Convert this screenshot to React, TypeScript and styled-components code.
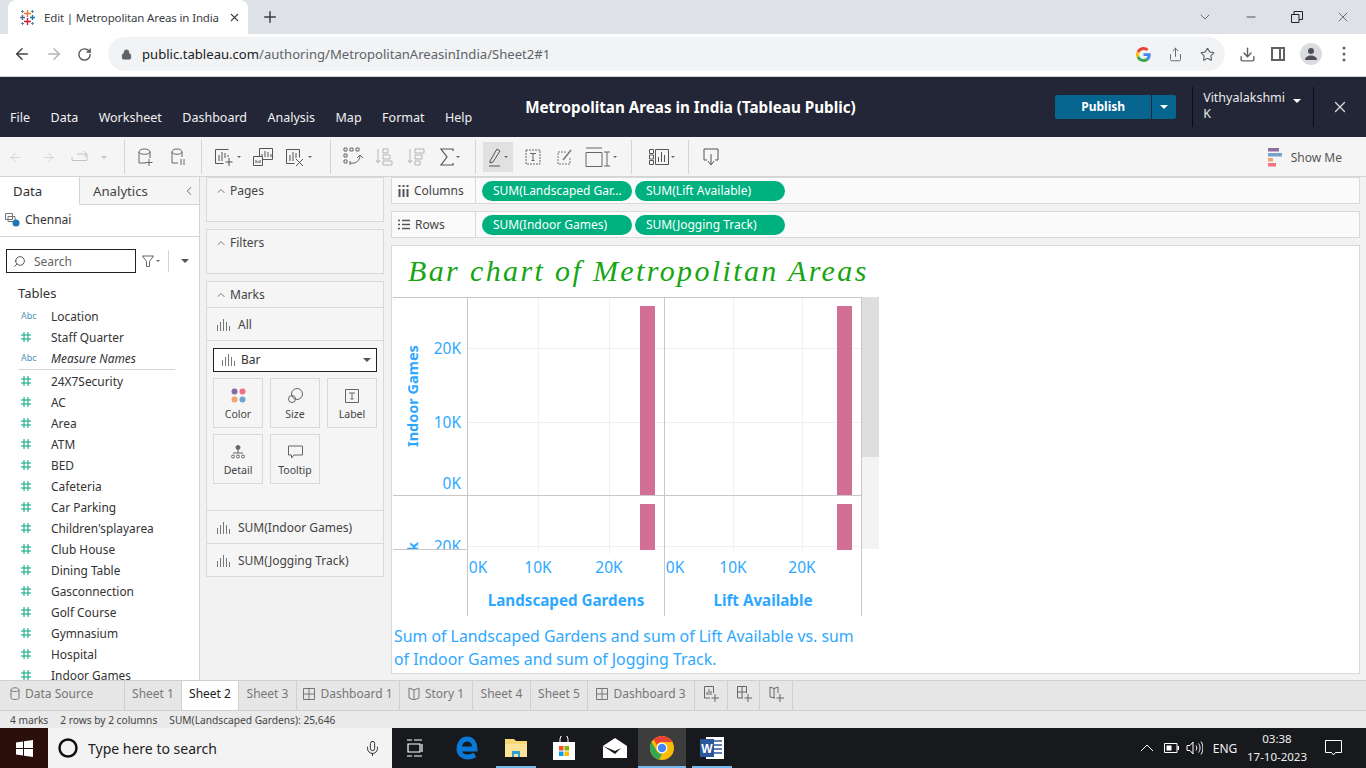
import React from 'react';
import styled, { createGlobalStyle } from 'styled-components';
import { ArrowLeft, ArrowRight, RotateCw, Lock, Share, Star, Download, X, Plus, ChevronDown, ChevronUp, ChevronLeft, Minus, Search, Mic } from 'lucide-react';

const Global = createGlobalStyle`
  html, body { margin: 0; padding: 0; overflow: hidden; background: #fff; }
  * { box-sizing: border-box; }
  svg { flex: none; }
`;

const UI = `"Noto Sans", "Open Sans", sans-serif`;

const Page = styled.div`
  width: 1366px;
  height: 768px;
  display: flex;
  flex-direction: column;
  overflow: hidden;
  font-family: ${UI};
  color: #333;
`;

/* ---------- browser chrome ---------- */
const TabStrip = styled.div`
  height: 34px;
  background: #dee1e6;
  display: flex;
  align-items: flex-end;
  padding-left: 8px;
  flex: none;
`;
const BrowserTab = styled.div`
  width: 240px;
  height: 34px;
  background: #fff;
  border-radius: 8px 8px 0 0;
  display: flex;
  align-items: center;
  padding: 0 10px 0 12px;
  gap: 9px;
  font-size: 11.5px;
  color: #3c4043;
  white-space: nowrap;
`;
const TabTitle = styled.span`
  flex: 1;
  letter-spacing: -0.15px;
`;
const NewTab = styled.div`
  width: 44px;
  height: 34px;
  display: flex;
  align-items: center;
  justify-content: center;
  color: #3c4043;
`;
const WindowButtons = styled.div`
  margin-left: auto;
  display: flex;
  height: 34px;
  align-items: center;
  color: #333;
`;
const WindowButton = styled.div<{ $w: number }>`
  width: ${(p) => p.$w}px;
  display: flex;
  justify-content: center;
`;
const AddressRow = styled.div`
  height: 43px;
  flex: none;
  background: #fff;
  border-bottom: 1px solid #d3d5d8;
  display: flex;
  align-items: center;
  padding-bottom: 2px;
`;
const NavIcons = styled.div`
  width: 108px;
  display: flex;
  align-items: center;
  padding-left: 13px;
  gap: 14px;
  color: #5f6368;
`;
const UrlBar = styled.div`
  width: 1117px;
  height: 34px;
  border-radius: 17px;
  background: #f1f3f4;
  display: flex;
  align-items: center;
  padding: 0 10px 0 13px;
  font-size: 13.1px;
  color: #5f6368;
`;
const UrlText = styled.span`
  margin-left: 10px;
  flex: 1;
  b { font-weight: 400; color: #202124; }
`;
const UrlIcons = styled.div`
  display: flex;
  align-items: center;
  gap: 17px;
  color: #5f6368;
`;
const BrowserActions = styled.div`
  flex: 1;
  display: flex;
  align-items: center;
  padding-left: 14px;
  gap: 15px;
  color: #5f6368;
`;
const Avatar = styled.div`
  width: 22px;
  height: 22px;
  border-radius: 50%;
  background: #dadce0;
  display: flex;
  align-items: center;
  justify-content: center;
  margin-right: 5px;
`;

/* ---------- tableau header ---------- */
const Header = styled.div`
  height: 60px;
  flex: none;
  background: #232637;
  display: flex;
  color: #fff;
`;
const MenuBar = styled.div`
  width: 481px;
  display: flex;
  align-items: flex-end;
  padding: 0 0 11px 10px;
  gap: 20.5px;
  font-size: 12.5px;
  color: #f1f1f1;
`;
const DocTitle = styled.div`
  width: 420px;
  text-align: center;
  font-weight: 700;
  font-size: 15.2px;
  line-height: 60px;
  white-space: nowrap;
`;
const PublishWrap = styled.div`
  margin-left: 155px;
  display: flex;
  width: 121px;
  height: 24px;
  margin-top: 18px;
  border-radius: 2px;
  overflow: hidden;
  background: #06658f;
`;
const PublishButton = styled.div`
  width: 97px;
  font-size: 12px;
  font-weight: 700;
  text-align: center;
  line-height: 24px;
  border-right: 1px solid #232637;
`;
const PublishCaret = styled.div`
  width: 24px;
  display: flex;
  align-items: center;
  justify-content: center;
`;
const Caret = styled.i<{ $c?: string; $s?: number }>`
  display: inline-block;
  width: 0;
  height: 0;
  border-left: ${(p) => p.$s ?? 4}px solid transparent;
  border-right: ${(p) => p.$s ?? 4}px solid transparent;
  border-top: ${(p) => p.$s ?? 4}px solid ${(p) => p.$c ?? '#fff'};
`;
const UserBox = styled.div`
  margin: 10px 0 0 16px;
  width: 122px;
  height: 40px;
  border-left: 1px solid #0c0d12;
  border-right: 1px solid #0c0d12;
  padding: 3px 0 0 10px;
  font-size: 12.5px;
  line-height: 16px;
  color: #e9e9e9;
  position: relative;
`;
const UserCaret = styled.span`
  position: absolute;
  left: 100px;
  top: 4px;
`;
const HeaderClose = styled.div`
  width: 52px;
  display: flex;
  align-items: center;
  justify-content: center;
  color: #d8d8d8;
`;

/* ---------- toolbar ---------- */
const Toolbar = styled.div`
  height: 40px;
  flex: none;
  background: #f5f5f5;
  border-bottom: 1px solid #d4d4d4;
  padding-top: 1px;
  display: flex;
  align-items: center;
`;
const ToolGroup = styled.div<{ $w: number; $pl?: number; $end?: boolean }>`
  width: ${(p) => p.$w}px;
  height: 34px;
  padding-left: ${(p) => p.$pl ?? 0}px;
  display: flex;
  align-items: center;
  border-right: ${(p) => (p.$end ? 'none' : '1px solid #d4d4d4')};
`;
const Tool = styled.div<{ $w: number; $on?: boolean }>`
  width: ${(p) => p.$w}px;
  height: 30px;
  display: flex;
  align-items: center;
  justify-content: center;
  gap: 2px;
  background: ${(p) => (p.$on ? '#e1e1e1' : 'transparent')};
`;
const ShowMe = styled.div`
  margin-left: auto;
  padding-right: 24px;
  display: flex;
  align-items: center;
  gap: 9px;
  font-size: 12px;
  color: #555;
`;

/* ---------- workspace ---------- */
const Workspace = styled.div`
  height: 503px;
  flex: none;
  display: flex;
  background: #f2f2f2;
  overflow: hidden;
`;
const Sidebar = styled.div`
  width: 200px;
  flex: none;
  background: #fff;
  border-right: 1px solid #d4d4d4;
  height: 503px;
  overflow: hidden;
`;
const SideTabs = styled.div`
  height: 28px;
  display: flex;
  align-items: center;
  background: #f5f5f5;
  border-bottom: 1px solid #d4d4d4;
  font-size: 13.2px;
`;
const SideTab = styled.div<{ $on?: boolean; $w: number }>`
  width: ${(p) => p.$w}px;
  height: 28px;
  line-height: 28px;
  padding-left: 13px;
  background: ${(p) => (p.$on ? '#fff' : 'transparent')};
  border-right: ${(p) => (p.$on ? '1px solid #d4d4d4' : 'none')};
  border-bottom: ${(p) => (p.$on ? '1px solid #fff' : 'none')};
  color: ${(p) => (p.$on ? '#333' : '#444')};
`;
const Collapse = styled.div`
  margin-left: auto;
  width: 17px;
  color: #555;
  display: flex;
  align-items: center;
`;
const SourceRow = styled.div`
  height: 32px;
  border-bottom: 1px solid #d4d4d4;
  display: flex;
  align-items: center;
  padding: 0 0 2px 5px;
  gap: 5px;
  font-size: 12px;
`;
const SearchRow = styled.div`
  display: flex;
  align-items: center;
  margin: 12px 0 0 6px;
`;
const SearchBox = styled.div`
  width: 130px;
  height: 24px;
  border: 1px solid #222;
  display: flex;
  align-items: center;
  padding-left: 6px;
  gap: 8px;
  font-size: 12px;
  color: #666;
`;
const SearchGlass = styled(Search)`
  transform: scaleX(-1);
`;
const SearchTools = styled.div`
  display: flex;
  align-items: center;
  padding-left: 6px;
  height: 22px;
  gap: 2px;
`;
const SearchDivider = styled.div`
  width: 1px;
  height: 22px;
  background: #d4d4d4;
  margin: 0 10px 0 6px;
`;
const TablesHead = styled.div`
  margin: 10px 0 0 18px;
  height: 21px;
  line-height: 21px;
  font-size: 13px;
  color: #333;
`;
const FieldList = styled.div`
  margin-top: 1px;
`;
const Field = styled.div`
  height: 21px;
  display: flex;
  align-items: center;
  font-size: 11.9px;
  color: #333;
  white-space: nowrap;
`;
const FieldIcon = styled.div`
  width: 51px;
  padding-left: 21px;
  display: flex;
  align-items: center;
`;
const AbcTag = styled.span`
  font-size: 9px;
  color: #4d94b8;
`;
const FieldName = styled.span<{ $it?: boolean }>`
  font-style: ${(p) => (p.$it ? 'italic' : 'normal')};
`;
const Rule = styled.div`
  height: 1px;
  margin: 1px 24px 0 18px;
  background: #d4d4d4;
`;

/* ---------- cards ---------- */
const Shelves = styled.div`
  width: 178px;
  flex: none;
  margin: 0 0 0 6px;
  display: flex;
  flex-direction: column;
  gap: 7px;
`;
const Card = styled.div<{ $h: number }>`
  height: ${(p) => p.$h}px;
  background: #f5f5f5;
  border: 1px solid #d9d9d9;
`;
const CardHead = styled.div`
  height: 25px;
  display: flex;
  align-items: center;
  padding-left: 8px;
  gap: 3px;
  font-size: 12px;
  color: #444;
`;
const MarksRow = styled.div`
  height: 33px;
  border-top: 1px solid #d9d9d9;
  display: flex;
  align-items: center;
  padding-left: 10px;
  gap: 8px;
  font-size: 12px;
  color: #444;
`;
const MarksBody = styled.div`
  height: 170px;
  border-top: 1px solid #d9d9d9;
`;
const MarkSelect = styled.div`
  margin: 7px 6px 0 6px;
  height: 24px;
  border: 1px solid #222;
  background: #fff;
  display: flex;
  align-items: center;
  padding: 0 5px 1px 8px;
  gap: 6px;
  font-size: 12px;
  i { margin-left: auto; }
`;
const MarkGrid = styled.div`
  margin: 6px 0 0 6px;
  height: 133px;
  display: grid;
  grid-template-columns: repeat(3, 50px);
  grid-auto-rows: 50px;
  gap: 6px 7px;
`;
const MarkBtn = styled.div`
  border: 1px solid #d9d9d9;
  background: #f5f5f5;
  display: flex;
  flex-direction: column;
  align-items: center;
  justify-content: flex-start;
  padding-top: 8px;
  gap: 3px;
  font-size: 10.5px;
  color: #444;
`;
const MarkIcon = styled.div`
  height: 17px;
  display: flex;
  align-items: center;
`;

/* ---------- right side ---------- */
const Main = styled.div`
  width: 969px;
  margin: 0 0 0 7px;
  display: flex;
  flex-direction: column;
  gap: 7px;
`;
const Shelf = styled.div`
  height: 27px;
  background: #fafafa;
  border: 1px solid #d9d9d9;
  display: flex;
  align-items: center;
`;
const ShelfLabel = styled.div`
  width: 84px;
  height: 25px;
  padding-left: 6px;
  border-right: 1px solid #d9d9d9;
  display: flex;
  align-items: center;
  gap: 5px;
  font-size: 12px;
  color: #444;
`;
const Pills = styled.div`
  display: flex;
  gap: 3px;
  padding-left: 6px;
`;
const Pill = styled.div`
  width: 150px;
  height: 20px;
  border-radius: 10px;
  background: #00b180;
  color: #fff;
  font-size: 12px;
  line-height: 20px;
  padding-left: 11px;
  white-space: nowrap;
`;
const Viz = styled.div`
  height: 429px;
  background: #fff;
  border: 1px solid #d9d9d9;
`;
const VizTitle = styled.div`
  height: 51px;
  padding: 7px 0 0 16px;
  font-family: "Liberation Serif", serif;
  font-style: italic;
  font-size: 30px;
  line-height: 36px;
  color: #17a512;
  letter-spacing: 2.37px;
  white-space: nowrap;
`;
const ChartSvg = styled.svg`
  display: block;
  margin-left: 1px;
`;
const Caption = styled.div`
  padding: 8px 0 0 2px;
  width: 472px;
  font-size: 15.85px;
  line-height: 23px;
  color: #2ea8ff;
`;

/* ---------- bottom bars ---------- */
const SheetTabs = styled.div`
  height: 31px;
  flex: none;
  background: #e6e6e6;
  border-top: 1px solid #cfcfcf;
  border-bottom: 1px solid #cfcfcf;
  display: flex;
`;
const SheetTab = styled.div<{ $w: number; $on?: boolean; $start?: boolean }>`
  width: ${(p) => p.$w}px;
  display: flex;
  align-items: center;
  justify-content: ${(p) => (p.$start ? 'flex-start' : 'center')};
  gap: 5px;
  padding: 0 0 4px ${(p) => (p.$start ? 10 : 0)}px;
  font-size: 12px;
  white-space: nowrap;
  color: ${(p) => (p.$on ? '#222' : '#777')};
  background: ${(p) => (p.$on ? '#fff' : 'transparent')};
  border-right: 1px solid #d0d0d0;
`;
const StatusBar = styled.div`
  height: 17px;
  flex: none;
  background: #eaeaea;
  display: flex;
  align-items: center;
  padding-left: 10px;
  gap: 12px;
  font-size: 10.2px;
  color: #444;
`;
const Taskbar = styled.div`
  height: 40px;
  flex: none;
  background: #17191c;
  display: flex;
  align-items: stretch;
  color: #fff;
`;
const StartButton = styled.div`
  width: 48px;
  background: #2a0f0a;
  display: flex;
  align-items: center;
  justify-content: center;
`;
const TaskSearch = styled.div`
  width: 344px;
  background: #f3f3f3;
  display: flex;
  align-items: center;
  padding: 0 11px 0 10px;
  gap: 10px;
  font-size: 14px;
  color: #222;
`;
const TaskSearchText = styled.span`
  flex: 1;
`;
const TaskApps = styled.div`
  display: flex;
`;
const TaskApp = styled.div<{ $w: number; $on?: boolean; $open?: boolean }>`
  width: ${(p) => p.$w}px;
  display: flex;
  align-items: center;
  justify-content: center;
  background: ${(p) => (p.$on ? '#3d3d3d' : 'transparent')};
  position: relative;
  &::after {
    content: '';
    display: ${(p) => (p.$open ? 'block' : 'none')};
    position: absolute;
    left: 0;
    right: 0;
    bottom: 0;
    height: 2px;
    background: #76b9ed;
  }
`;
const Tray = styled.div`
  margin-left: auto;
  display: flex;
  align-items: center;
  font-size: 12px;
  color: #f0f0f0;
`;
const TrayItem = styled.div<{ $w: number; $ml?: number }>`
  width: ${(p) => p.$w}px;
  margin-left: ${(p) => p.$ml ?? 0}px;
  display: flex;
  justify-content: center;
  align-items: center;
`;
const Clock = styled.div`
  width: 76px;
  text-align: center;
  line-height: 18px;
  font-size: 11.5px;
`;

/* ---------- drawn icons ---------- */
const TableauMark = () => (
  <svg width="15" height="15" viewBox="0 0 15 15" strokeWidth="1.4">
    <path d="M7.5 0v7M4 3.5h7" stroke="#e8762b" />
    <path d="M7.5 8v7M4 11.5h7" stroke="#c72035" />
    <path d="M2.5 5v5M0 7.5h5" stroke="#5b6591" />
    <path d="M12.5 5v5M10 7.5h5" stroke="#1f77b4" />
    <path d="M2.5 0v3M1 1.5h3M12.5 0v3M11 1.5h3M2.5 12v3M1 13.5h3M12.5 12v3M11 13.5h3" stroke="#59879b" strokeWidth="1" />
  </svg>
);

const GoogleG = () => (
  <svg width="15" height="15" viewBox="0 0 48 48">
    <path fill="#EA4335" d="M24 9.500c3.540 0 6.710 1.220 9.210 3.600l6.850-6.850C35.900 2.380 30.470 0 24 0 14.620 0 6.510 5.380 2.560 13.220l7.980 6.190C12.430 13.720 17.740 9.500 24 9.500z" />
    <path fill="#4285F4" d="M46.980 24.550c0-1.570-.15-3.090-.38-4.550H24v9.020h12.940c-.58 2.960-2.260 5.480-4.780 7.180l7.730 6c4.510-4.180 7.090-10.360 7.090-17.650z" />
    <path fill="#FBBC05" d="M10.530 28.590c-.48-1.450-.76-2.990-.76-4.590s.27-3.140.76-4.590l-7.980-6.190C.92 16.460 0 20.120 0 24c0 3.880.92 7.540 2.560 10.780l7.970-6.190z" />
    <path fill="#34A853" d="M24 48c6.480 0 11.930-2.130 15.890-5.810l-7.730-6c-2.150 1.450-4.920 2.300-8.160 2.300-6.260 0-11.570-4.220-13.470-9.910l-7.980 6.190C6.510 42.620 14.620 48 24 48z" />
  </svg>
);

const Line = ({ w = 20, h = 20, d, c = '#666', sw = 1 }: { w?: number; h?: number; d: string; c?: string; sw?: number }) => (
  <svg width={w} height={h} viewBox={`0 0 ${w} ${h}`} fill="none" stroke={c} strokeWidth={sw}>
    <path d={d} />
  </svg>
);

const BarGlyph = () => (
  <svg width="13" height="13" viewBox="0 0 13 13" stroke="#777" strokeWidth="1">
    <path d="M.5 13V7M3.500 13V4M6.500 13V1M9.500 13V4M12.500 13V8" />
  </svg>
);

const HashIcon = () => (
  <svg width="10" height="10" viewBox="0 0 10 10" stroke="#00a67c" strokeWidth="1">
    <path d="M3 0v10M7 0v10M0 3h10M0 7h10" />
  </svg>
);

const ChromeLogo = () => (
  <svg width="24" height="24" viewBox="0 0 24 24">
    <circle cx="12" cy="12" r="12" fill="#fbbc05" />
    <path d="M12 0a12 12 0 0 1 10.400 6H12a6 6 0 0 0-5.200 3L3.500 3.500A12 12 0 0 1 12 0z" fill="#ea4335" />
    <path d="M1.600 6l5.200 9a6 6 0 0 0 5.200 3l-3 5.700A12 12 0 0 1 1.600 6z" fill="#34a853" />
    <circle cx="12" cy="12" r="5.400" fill="#fff" />
    <circle cx="12" cy="12" r="4.200" fill="#4285f4" />
  </svg>
);

const fields = ['24X7Security', 'AC', 'Area', 'ATM', 'BED', 'Cafeteria', 'Car Parking', "Children'splayarea", 'Club House', 'Dining Table', 'Gasconnection', 'Golf Course', 'Gymnasium', 'Hospital', 'Indoor Games'];

const axis = '#2ea8ff';
const gridV = [538, 609, 733, 802];
const bars = [640, 837];

const Chart = () => (
  <ChartSvg width="490" height="320" viewBox="393 297 490 320" fontFamily={UI}>
    <defs>
      <clipPath id="pane">
        <rect x="393" y="297" width="490" height="252" />
      </clipPath>
    </defs>
    <rect x="862" y="297" width="17" height="252" fill="#f3f3f3" />
    <rect x="862" y="297" width="17" height="160" fill="#dedede" />
    {gridV.map((x) => (
      <line key={x} x1={x + 0.5} x2={x + 0.5} y1="297" y2="554" stroke="#f0f0f0" />
    ))}
    {[348, 422, 546].map((y) => (
      <line key={y} x1="467" x2="861" y1={y + 0.5} y2={y + 0.5} stroke="#f0f0f0" />
    ))}
    {bars.map((x) => (
      <g key={x} fill="#d17094">
        <rect x={x} y="306" width="15" height="189" />
        <rect x={x} y="504" width="15" height="46" />
      </g>
    ))}
    <g stroke="#c8c8c8">
      <line x1="393" x2="861" y1="297.500" y2="297.500" />
      <line x1="393" x2="861" y1="495.500" y2="495.500" />
      <line x1="393" x2="467" y1="549.500" y2="549.500" />
      {[467, 664, 861].map((x) => (
        <line key={x} x1={x + 0.5} x2={x + 0.5} y1="297" y2="616" />
      ))}
    </g>
    <g fill={axis} fontSize="15.5" textAnchor="end">
      <text x="461" y="354">20K</text>
      <text x="461" y="428">10K</text>
      <text x="461" y="489">0K</text>
      <text x="461" y="552" clipPath="url(#pane)">20K</text>
    </g>
    <g fill={axis} fontWeight="700" fontSize="14.5">
      <text transform="translate(418 447) rotate(-90)">Indoor Games</text>
      <g clipPath="url(#pane)">
        <text transform="translate(418 551) rotate(-90)">k</text>
      </g>
    </g>
    <g fill={axis} fontSize="15.5" textAnchor="middle">
      <text x="478" y="573">0K</text>
      <text x="538" y="573">10K</text>
      <text x="609" y="573">20K</text>
      <text x="675" y="573">0K</text>
      <text x="733" y="573">10K</text>
      <text x="802" y="573">20K</text>
    </g>
    <g fill={axis} fontSize="15.2" fontWeight="700" textAnchor="middle">
      <text x="566" y="606">Landscaped Gardens</text>
      <text x="763" y="606">Lift Available</text>
    </g>
  </ChartSvg>
);

export default function App() {
  return (
    <Page>
      <Global />
      <TabStrip>
        <BrowserTab>
          <TableauMark />
          <TabTitle>Edit | Metropolitan Areas in India</TabTitle>
          <X size={13} strokeWidth={2} />
        </BrowserTab>
        <NewTab>
          <Plus size={18} strokeWidth={2} />
        </NewTab>
        <WindowButtons>
          <WindowButton $w={46}><ChevronDown size={16} strokeWidth={1} /></WindowButton>
          <WindowButton $w={46}><Minus size={14} strokeWidth={1.4} /></WindowButton>
          <WindowButton $w={46}>
            <Line w={12} h={12} d="M.5 3.500h7.500v8H.5zM3 3.500V.5h8.500v8H8" c="#222" />
          </WindowButton>
          <WindowButton $w={46}><X size={16} strokeWidth={1} /></WindowButton>
        </WindowButtons>
      </TabStrip>
      <AddressRow>
        <NavIcons>
          <ArrowLeft size={18} strokeWidth={2} color="#444" />
          <ArrowRight size={18} strokeWidth={2} color="#b3b5b8" />
          <RotateCw size={15} strokeWidth={2.2} color="#555" />
        </NavIcons>
        <UrlBar>
          <Lock size={11} fill="#5f6368" strokeWidth={2} />
          <UrlText><b>public.tableau.com</b>/authoring/MetropolitanAreasinIndia/Sheet2#1</UrlText>
          <UrlIcons>
            <GoogleG />
            <Share size={15} strokeWidth={1.5} />
            <Star size={15} strokeWidth={1.8} />
          </UrlIcons>
        </UrlBar>
        <BrowserActions>
          <Download size={17} strokeWidth={2} />
          <Line w={14} h={14} d="M1 1h12v12H1zM9 1v12" c="#5f6368" sw={2} />
          <Avatar>
            <svg width="14" height="14" viewBox="0 0 14 14" fill="#4d5156">
              <circle cx="7" cy="4" r="3" />
              <path d="M1 13c0-3 3-4.500 6-4.500s6 1.500 6 4.500z" />
            </svg>
          </Avatar>
          <svg width="4" height="16" viewBox="0 0 4 16" fill="#5f6368">
            <circle cx="2" cy="2" r="1.500" />
            <circle cx="2" cy="8" r="1.500" />
            <circle cx="2" cy="14" r="1.500" />
          </svg>
        </BrowserActions>
      </AddressRow>

      <Header>
        <MenuBar>
          {['File', 'Data', 'Worksheet', 'Dashboard', 'Analysis', 'Map', 'Format', 'Help'].map((m) => (
            <span key={m}>{m}</span>
          ))}
        </MenuBar>
        <DocTitle>Metropolitan Areas in India (Tableau Public)</DocTitle>
        <PublishWrap>
          <PublishButton>Publish</PublishButton>
          <PublishCaret><Caret $s={4} /></PublishCaret>
        </PublishWrap>
        <UserBox>
          Vithyalakshmi
          <br />
          K
          <UserCaret><Caret $s={4} /></UserCaret>
        </UserBox>
        <HeaderClose><X size={18} strokeWidth={1.8} /></HeaderClose>
      </Header>

      <Toolbar>
        <ToolGroup $w={125}>
          <Tool $w={31}><ArrowLeft size={15} strokeWidth={1} color="#c2c2c2" /></Tool>
          <Tool $w={34}><ArrowRight size={15} strokeWidth={1} color="#c2c2c2" /></Tool>
          <Tool $w={31}><Line w={20} h={14} d="M1 7v3.500h15V4H6M16 4l-3-3M16 4l-3 3" c="#c2c2c2" /></Tool>
          <Tool $w={16}><Caret $c="#c2c2c2" $s={3} /></Tool>
        </ToolGroup>
        <ToolGroup $w={77} $pl={6}>
          <Tool $w={32}><Line w={20} h={20} d="M2 5c0-4 11-4 11 0v6M2 5c0 3 11 3 11 0M2 5v11h7M12 12v7M8.500 15.500h7" c="#666" /></Tool>
          <Tool $w={32}><Line w={18} h={20} d="M2 5c0-4 10-4 10 0v5M2 5c0 3 10 3 10 0M2 5v11h6M11 12v6M14 12v6" c="#666" /></Tool>
        </ToolGroup>
        <ToolGroup $w={129} $pl={8}>
          <Tool $w={36}><Line w={20} h={20} d="M.5 2.500h13M.5 2.500v14h8M4 14V8M7 14V5M10 11V6M13 10V8M14 11v8M10.500 15h7" c="#555" /><Caret $c="#666" $s={2.5} /></Tool>
          <Tool $w={34}><Line w={20} h={20} d="M6.500 9V1.500h13v11H10M9 9V7M12 10V4M15 10V5M18 10V7M.5 9.500h9v9h-9zM3 16v-3M5 16v-2M7 16v-3" c="#555" /></Tool>
          <Tool $w={38}><Line w={20} h={20} d="M.5 2.500h13v8M.5 2.500v14h8M4 14V8M7 14V5M10 11V6M10 12l7 7M17 12l-7 7" c="#555" /><Caret $c="#666" $s={2.5} /></Tool>
        </ToolGroup>
        <ToolGroup $w={145} $pl={6}>
          <Tool $w={32}><Line w={20} h={20} d="M1 1h3v3H1zM7 1h3v3H7zM13 1h3v3h-3zM1 7h3v3H1zM1 13h3v3H1zM7 16c6 1 10-2 10-8M14 11l3-3 3 3M7 14v4" c="#666" /></Tool>
          <Tool $w={30}><Line w={18} h={20} d="M3 2v14M1 13l2 3 2-3M8 2h5v4H8zM8 8h7v4H8zM8 14h9v4H8z" c="#b5b5b5" /></Tool>
          <Tool $w={34}><Line w={18} h={20} d="M3 2v14M1 13l2 3 2-3M8 2h9v4H8zM8 8h7v4H8zM8 14h5v4H8z" c="#b5b5b5" /></Tool>
          <Tool $w={34}>
            <Line w={14} h={18} d="M13 3V1H1l6 8-6 8h12v-2" c="#555" sw={1.200} />
            <Caret $c="#666" $s={2.5} />
          </Tool>
        </ToolGroup>
        <ToolGroup $w={156} $pl={7}>
          <Tool $w={30} $on>
            <Line w={14} h={20} d="M2 14L9 2l3 2-7 11-3 1zM1 19h11" c="#555" />
            <Caret $c="#666" $s={2.5} />
          </Tool>
          <Tool $w={40}>
            <svg width="16" height="16" viewBox="0 0 16 16" fill="none" stroke="#666">
              <path d="M1 1h14v14H1z" strokeDasharray="2 1" />
              <path d="M5 4.500h6M8 4.500v7M6.500 11.500h3" />
            </svg>
          </Tool>
          <Tool $w={24}>
            <svg width="16" height="16" viewBox="0 0 16 16" fill="none" stroke="#777">
              <path d="M9 3H1v12h12V8" strokeDasharray="2 1" />
              <path d="M6 11L14 1" strokeWidth="1.500" />
            </svg>
          </Tool>
          <Tool $w={48}>
            <Line w={26} h={20} d="M1 1h16M1 5.500h16v14H1zM19 5h6M22 5v14M19 19h6" c="#666" />
            <Caret $c="#666" $s={2.5} />
          </Tool>
        </ToolGroup>
        <ToolGroup $w={57} $pl={8}>
          <Tool $w={44}>
            <Line w={20} h={16} d="M.5 .5h4v4h-4zM.5 6h4v4h-4zM.5 11.500h4v4h-4zM6.500 .5h13v15h-13zM9.500 13V8M12.500 13V3M15.500 13V6" c="#555" />
            <Caret $c="#666" $s={2.5} />
          </Tool>
        </ToolGroup>
        <ToolGroup $w={60} $end>
          <Tool $w={44}><Line w={16} h={18} d="M4 12H1V1h14v11h-3M8 6v10M5 13l3 4 3-4" c="#555" /></Tool>
        </ToolGroup>
        <ShowMe>
          <svg width="14" height="19" viewBox="0 0 14 19">
            <rect width="11" height="3.500" fill="#8e6f9e" />
            <rect y="5" width="14" height="3.500" fill="#76a3cc" />
            <rect y="10" width="5" height="3.500" fill="#f2a470" />
            <rect y="15" width="8" height="3.500" fill="#f0727f" />
          </svg>
          Show Me
        </ShowMe>
      </Toolbar>

      <Workspace>
        <Sidebar>
          <SideTabs>
            <SideTab $on $w={80}>Data</SideTab>
            <SideTab $w={84}>Analytics</SideTab>
            <Collapse><ChevronLeft size={14} strokeWidth={1.4} /></Collapse>
          </SideTabs>
          <SourceRow>
            <svg width="15" height="15" viewBox="0 0 15 15">
              <path d="M.5 1.500h7v6h-7zM3 4.500h7v5H3z" fill="none" stroke="#777" />
              <circle cx="11" cy="11" r="3.500" fill="#1f77b4" />
            </svg>
            Chennai
          </SourceRow>
          <SearchRow>
            <SearchBox>
              <SearchGlass size={13} strokeWidth={1.5} color="#333" />
              Search
            </SearchBox>
            <SearchTools>
              <Line w={12} h={13} d="M.5 1h11L7.500 6.500v5h-3v-5z" c="#666" />
              <Caret $c="#666" $s={2.5} />
              <SearchDivider />
              <Caret $c="#555" $s={4} />
            </SearchTools>
          </SearchRow>
          <TablesHead>Tables</TablesHead>
          <FieldList>
            <Field><FieldIcon><AbcTag>Abc</AbcTag></FieldIcon><FieldName>Location</FieldName></Field>
            <Field><FieldIcon><HashIcon /></FieldIcon><FieldName>Staff Quarter</FieldName></Field>
            <Field><FieldIcon><AbcTag>Abc</AbcTag></FieldIcon><FieldName $it>Measure Names</FieldName></Field>
            <Rule />
            {fields.map((f) => (
              <Field key={f}><FieldIcon><HashIcon /></FieldIcon><FieldName>{f}</FieldName></Field>
            ))}
          </FieldList>
        </Sidebar>

        <Shelves>
          <Card $h={45}>
            <CardHead><ChevronUp size={12} strokeWidth={1.4} />Pages</CardHead>
          </Card>
          <Card $h={45}>
            <CardHead><ChevronUp size={12} strokeWidth={1.4} />Filters</CardHead>
          </Card>
          <Card $h={296}>
            <CardHead><ChevronUp size={12} strokeWidth={1.4} />Marks</CardHead>
            <MarksRow><BarGlyph />All</MarksRow>
            <MarksBody>
              <MarkSelect>
                <BarGlyph />
                Bar
                <Caret $c="#555" $s={4} />
              </MarkSelect>
              <MarkGrid>
                <MarkBtn>
                  <MarkIcon>
                    <svg width="15" height="15" viewBox="0 0 15 15">
                      <circle cx="3.500" cy="3.500" r="3" fill="#7f6ea3" />
                      <circle cx="11.500" cy="3.500" r="3" fill="#f0727f" />
                      <circle cx="3.500" cy="11.500" r="3" fill="#f2a470" />
                      <circle cx="11.500" cy="11.500" r="3" fill="#76a3cc" />
                    </svg>
                  </MarkIcon>
                  Color
                </MarkBtn>
                <MarkBtn>
                  <MarkIcon>
                    <svg width="15" height="15" viewBox="0 0 15 15" fill="none" stroke="#666">
                      <circle cx="9" cy="6" r="5.500" />
                      <circle cx="4" cy="11" r="3.500" />
                    </svg>
                  </MarkIcon>
                  Size
                </MarkBtn>
                <MarkBtn>
                  <MarkIcon><Line w={14} h={14} d="M.5 .5h13v13H.5zM4 4h6M7 4v6M5.500 10h3" c="#666" /></MarkIcon>
                  Label
                </MarkBtn>
                <MarkBtn>
                  <MarkIcon>
                    <svg width="14" height="14" viewBox="0 0 14 14" fill="none" stroke="#666">
                      <circle cx="7" cy="2.500" r="2" fill="#666" />
                      <path d="M7 5v3M2 8h10" />
                      <circle cx="2" cy="11.500" r="1.500" />
                      <circle cx="7" cy="11.500" r="1.500" />
                      <circle cx="12" cy="11.500" r="1.500" />
                    </svg>
                  </MarkIcon>
                  Detail
                </MarkBtn>
                <MarkBtn>
                  <MarkIcon><Line w={15} h={14} d="M.5 1h14v9H6l-2.500 3v-3H.5z" c="#666" /></MarkIcon>
                  Tooltip
                </MarkBtn>
              </MarkGrid>
            </MarksBody>
            <MarksRow><BarGlyph />SUM(Indoor Games)</MarksRow>
            <MarksRow><BarGlyph />SUM(Jogging Track)</MarksRow>
          </Card>
        </Shelves>

        <Main>
          <Shelf>
            <ShelfLabel>
              <Line w={11} h={12} d="M1.500 4v8M5.500 4v8M9.500 4v8M1.500 0v2M5.500 0v2M9.500 0v2" c="#555" sw={2} />
              Columns
            </ShelfLabel>
            <Pills>
              <Pill>SUM(Landscaped Gar...</Pill>
              <Pill>SUM(Lift Available)</Pill>
            </Pills>
          </Shelf>
          <Shelf>
            <ShelfLabel>
              <Line w={12} h={11} d="M0 1.500h2M4 1.500h8M0 5.500h2M4 5.500h8M0 9.500h2M4 9.500h8" c="#555" sw={1.500} />
              Rows
            </ShelfLabel>
            <Pills>
              <Pill>SUM(Indoor Games)</Pill>
              <Pill>SUM(Jogging Track)</Pill>
            </Pills>
          </Shelf>
          <Viz>
            <VizTitle>Bar chart of Metropolitan Areas</VizTitle>
            <Chart />
            <Caption>Sum of Landscaped Gardens and sum of Lift Available vs. sum of Indoor Games and sum of Jogging Track.</Caption>
          </Viz>
        </Main>
      </Workspace>

      <SheetTabs>
        <SheetTab $w={125} $start>
          <Line w={10} h={13} d="M1 3c0-3 8-3 8 0v8c0 2-8 2-8 0zM1 3c0 2 8 2 8 0" c="#777" />
          Data Source
        </SheetTab>
        <SheetTab $w={57}>Sheet 1</SheetTab>
        <SheetTab $w={57} $on>Sheet 2</SheetTab>
        <SheetTab $w={58}>Sheet 3</SheetTab>
        <SheetTab $w={103}><Line w={12} h={12} d="M.5 .5h11v11H.5zM6 .5v11M.5 6h11" c="#777" />Dashboard 1</SheetTab>
        <SheetTab $w={73}><Line w={12} h={13} d="M1 1l5 2 5-2v10l-5 2-5-2zM6 3v10" c="#777" />Story 1</SheetTab>
        <SheetTab $w={58}>Sheet 4</SheetTab>
        <SheetTab $w={57}>Sheet 5</SheetTab>
        <SheetTab $w={107}><Line w={12} h={12} d="M.5 .5h11v11H.5zM6 .5v11M.5 6h11" c="#777" />Dashboard 3</SheetTab>
        <SheetTab $w={33}><Line w={18} h={18} d="M8 13H2.500V1.500h9V8M5 10V7M7 10V4M9 10V6M13 9v8M9.500 13h7.500" c="#666" /></SheetTab>
        <SheetTab $w={32}><Line w={18} h={18} d="M8 13H2.500V1.500h9V8M7 1.500V13M2.500 7h9M13 9v8M9.500 13h7.500" c="#666" /></SheetTab>
        <SheetTab $w={33}><Line w={18} h={18} d="M8 13L3 12V2l4 1.500L11 2v6M7 3.500V13M13 9v8M9.500 13h7.500" c="#666" /></SheetTab>
      </SheetTabs>
      <StatusBar>
        <span>4 marks</span>
        <span>2 rows by 2 columns</span>
        <span>SUM(Landscaped Gardens): 25,646</span>
      </StatusBar>

      <Taskbar>
        <StartButton>
          <svg width="17" height="17" viewBox="0 0 17 17" fill="#fff">
            <path d="M0 2.400L7 1.400v6.600H0zM8 1.300L17 0v8H8zM0 9h7v6.600L0 14.600zM8 9h9v8l-9-1.300z" />
          </svg>
        </StartButton>
        <TaskSearch>
          <svg width="20" height="20" viewBox="0 0 20 20" fill="none" stroke="#111" strokeWidth="2.500">
            <circle cx="10" cy="10" r="8.500" />
          </svg>
          <TaskSearchText>Type here to search</TaskSearchText>
          <Mic size={17} strokeWidth={1.3} color="#222" />
        </TaskSearch>
        <TaskApps>
          <TaskApp $w={46}>
            <Line w={16} h={18} d="M0 1h5M7 1h8M1 5h12v8H1zM15 5v8M0 17h5M7 17h8" c="#fff" sw={1.200} />
          </TaskApp>
          <TaskApp $w={58}>
            <svg width="22" height="24" viewBox="0 0 22 24" fill="none" stroke="#0a78d7" strokeWidth="5">
              <path d="M3 13h16c0-6-3-10-8-10S3 8 3 13s4 8 9 8c3 0 5-1 7-2" />
            </svg>
          </TaskApp>
          <TaskApp $w={40} $open>
            <svg width="22" height="20" viewBox="0 0 22 20">
              <path d="M0 1h9l2 2h11v16H0z" fill="#f8d775" />
              <rect x="0" y="6" width="22" height="13" fill="#fbe39a" />
              <path d="M7 19v-6h8v6h-2v-3H9v3z" fill="#2b9fd8" />
            </svg>
          </TaskApp>
          <TaskApp $w={56}>
            <svg width="22" height="24" viewBox="0 0 22 24">
              <path d="M7 6V3a4 4 0 0 1 8 0v3" fill="none" stroke="#fff" />
              <rect y="6" width="22" height="18" fill="#fff" />
              <rect x="6" y="10" width="4.500" height="4.500" fill="#f25022" />
              <rect x="11.500" y="10" width="4.500" height="4.500" fill="#7fba00" />
              <rect x="6" y="15.500" width="4.500" height="4.500" fill="#00a4ef" />
              <rect x="11.500" y="15.500" width="4.500" height="4.500" fill="#ffb900" />
            </svg>
          </TaskApp>
          <TaskApp $w={46}>
            <svg width="24" height="20" viewBox="0 0 24 20">
              <path d="M0 8L12 0l12 8v12H0z" fill="#fff" />
              <path d="M0 8l12 5 6-3-6 6z" fill="#17191c" />
            </svg>
          </TaskApp>
          <TaskApp $w={48} $on $open>
            <ChromeLogo />
          </TaskApp>
          <TaskApp $w={6} />
          <TaskApp $w={40} $open>
            <svg width="24" height="24" viewBox="0 0 24 24" fontFamily="Liberation Sans, sans-serif">
              <rect x="6" y="1" width="18" height="22" fill="#fff" />
              <path d="M13 5h9M13 9h9M13 13h9M13 17h9" stroke="#2b579a" strokeWidth="1.500" />
              <rect x="0" y="3" width="14" height="18" fill="#2b579a" />
              <text x="7" y="16.500" fill="#fff" fontSize="12" fontWeight="700" textAnchor="middle">W</text>
            </svg>
          </TaskApp>
        </TaskApps>
        <Tray>
          <TrayItem $w={24}><Line w={14} h={10} d="M1 8l6-6 6 6" c="#fff" /></TrayItem>
          <TrayItem $w={24}>
            <svg width="15" height="10" viewBox="0 0 15 10">
              <path d="M.5 .5h12.500v9H.5z" fill="none" stroke="#fff" />
              <rect x="2.500" y="2.500" width="5" height="5" fill="#fff" />
              <rect x="13.500" y="3" width="1.500" height="4" fill="#fff" />
            </svg>
          </TrayItem>
          <TrayItem $w={22}>
            <Line w={17} h={14} d="M1 4.500h3L7 1v12L4 9.500H1zM10 4.500c1 1.500 1 3.500 0 5M12.500 2.500c2 2.500 2 6.500 0 9M15 .5c2.500 3.500 2.500 9.500 0 13" c="#fff" />
          </TrayItem>
          <TrayItem $w={28} $ml={6}>ENG</TrayItem>
          <Clock>03:38<br />17-10-2023</Clock>
          <TrayItem $w={8} />
          <TrayItem $w={20}>
            <Line w={17} h={16} d="M.5 .5h16v12h-6l-2 2.500-2-2.500h-6z" c="#fff" />
          </TrayItem>
          <TrayItem $w={23} />
        </Tray>
      </Taskbar>
    </Page>
  );
}
